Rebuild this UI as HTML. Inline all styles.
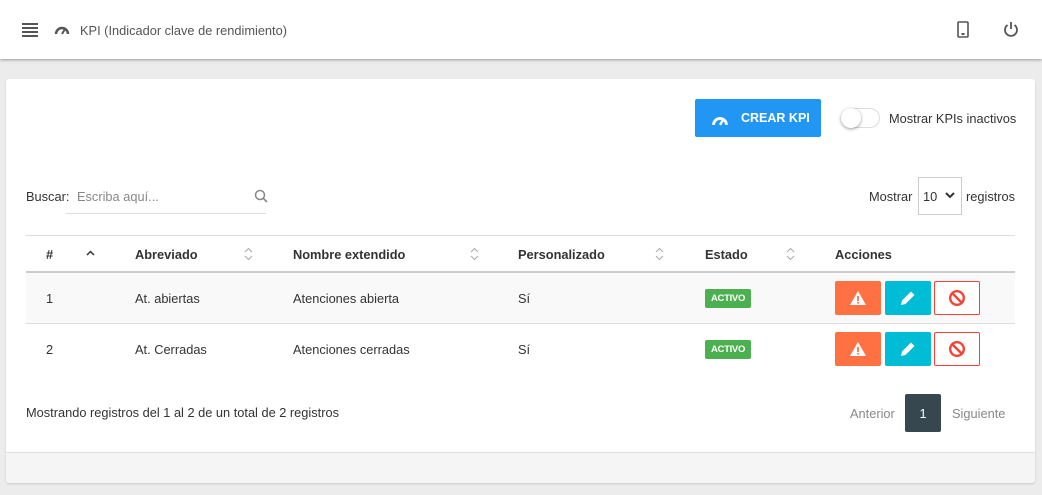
<!DOCTYPE html>
<html><head><meta charset="utf-8"><style>
*{box-sizing:border-box;margin:0;padding:0}
body{width:1042px;height:495px;background:#ececec;font-family:"Liberation Sans",sans-serif;font-size:12.8px;color:#333;position:relative;overflow:hidden}
.top{position:absolute;left:0;top:0;width:1042px;height:59px;background:#fff;box-shadow:0 1px 3px rgba(0,0,0,.35)}
.abs{position:absolute}
.card{position:absolute;left:6px;top:79px;width:1029px;height:404px;background:#fff;border-radius:3px;box-shadow:0 1px 2px rgba(0,0,0,.15)}
.foot{position:absolute;left:0;bottom:0;width:100%;height:31px;background:#f5f5f5;border-top:1px solid #e0e0e0;border-radius:0 0 3px 3px}
.th{position:absolute;top:247px;font-weight:bold;color:#333}
.td{position:absolute;color:#333}
.btn{position:absolute;width:46px;height:34px;border-radius:2px;display:flex;align-items:center;justify-content:center}
.badge{position:absolute;left:705px;width:46px;height:19px;background:#4caf50;color:#fff;font-size:9.5px;font-weight:bold;border-radius:2px;display:flex;align-items:center;justify-content:center;letter-spacing:-.3px}
</style></head><body>
<div class="top"></div>
<svg class="abs" style="left:22px;top:23px" width="16" height="14"><g fill="#555"><rect y="0" width="16" height="2"/><rect y="4" width="16" height="2"/><rect y="8" width="16" height="2"/><rect y="12" width="16" height="2"/></g></svg>
<svg class="abs" style="left:54px;top:24px" width="16" height="12" viewBox="0 0 16 12"><path d="M2 10A6 6 0 0 1 14 10" fill="none" stroke="#555" stroke-width="2.4"/><path d="M8 10L11 5" stroke="#555" stroke-width="2"/></svg>
<div class="abs" style="left:80px;top:23px;color:#555">KPI (Indicador clave de rendimiento)</div>
<svg class="abs" style="left:957px;top:21px" width="12" height="17"><rect x="1" y="1" width="10" height="15" rx="1" fill="none" stroke="#555" stroke-width="1.6"/><rect x="4.5" y="12" width="3" height="2" fill="#555"/></svg>
<svg class="abs" style="left:1003px;top:21px" width="16" height="16" viewBox="0 0 16 16"><path d="M4.5 4A6 6 0 1 0 11.5 4" fill="none" stroke="#555" stroke-width="1.8"/><path d="M8 1V8" stroke="#555" stroke-width="1.8"/></svg>
<div class="card"><div class="foot"></div></div>
<div class="abs" style="left:695px;top:99px;width:126px;height:38px;background:#2196f3;border-radius:2px"></div>
<svg class="abs" style="left:711px;top:113px" width="18" height="13" viewBox="0 0 16 12"><path d="M2 11A6 6 0 0 1 14 11" fill="none" stroke="#fff" stroke-width="2.6"/><path d="M8 11L11 6" stroke="#fff" stroke-width="2.2"/></svg>
<div class="abs" style="left:741px;top:111px;color:#fff;font-weight:bold;font-size:12.5px">CREAR KPI</div>
<div class="abs" style="left:841px;top:108px;width:39px;height:20px;border-radius:10px;border:1px solid #ddd;background:#fff"></div>
<div class="abs" style="left:841px;top:108px;width:20px;height:20px;border-radius:50%;background:#fff;box-shadow:0 1px 3px rgba(0,0,0,.4)"></div>
<div class="abs" style="left:889px;top:111px;color:#333">Mostrar KPIs inactivos</div>
<div class="abs" style="left:26px;top:189px">Buscar:</div>
<div class="abs" style="left:77px;top:189px;color:#888">Escriba aquí...</div>
<div class="abs" style="left:66px;top:213px;width:200px;height:1px;background:#ddd"></div>
<svg class="abs" style="left:254px;top:189px" width="14" height="14"><circle cx="6" cy="6" r="4.5" fill="none" stroke="#888" stroke-width="1.5"/><path d="M9.5 9.5L13 13" stroke="#888" stroke-width="1.6"/></svg>
<div class="abs" style="left:869px;top:189px">Mostrar</div>
<div class="abs" style="left:918px;top:177px;width:44px;height:38px;border:1px solid #ccc;background:#fff"></div>
<div class="abs" style="left:923px;top:189px">10</div>
<svg class="abs" style="left:945px;top:192px" width="10" height="7"><path d="M1 1L5 5L9 1" fill="none" stroke="#333" stroke-width="2"/></svg>
<div class="abs" style="left:966px;top:189px">registros</div>
<div class="abs" style="left:26px;top:235px;width:989px;height:1px;background:#ddd"></div>
<div class="abs" style="left:26px;top:271px;width:989px;height:2px;background:#ccc"></div>
<div class="abs" style="left:26px;top:273px;width:989px;height:50px;background:#f9f9f9"></div>
<div class="abs" style="left:26px;top:323px;width:989px;height:1px;background:#ddd"></div>
<div class="th" style="left:46px">#</div>
<svg class="abs" style="left:86px;top:250px" width="9" height="6"><path d="M1 5L4.5 1.5L8 5" fill="none" stroke="#333" stroke-width="1.5"/></svg>
<div class="th" style="left:135px">Abreviado</div>
<div class="th" style="left:293px">Nombre extendido</div>
<div class="th" style="left:518px">Personalizado</div>
<div class="th" style="left:705px">Estado</div>
<div class="th" style="left:835px">Acciones</div>
<svg class="abs" style="left:244px;top:247px" width="9" height="14"><path d="M1 5L4.5 1.5L8 5M1 9L4.5 12.5L8 9" fill="none" stroke="#aaa" stroke-width="1"/></svg>
<svg class="abs" style="left:470px;top:247px" width="9" height="14"><path d="M1 5L4.5 1.5L8 5M1 9L4.5 12.5L8 9" fill="none" stroke="#aaa" stroke-width="1"/></svg>
<svg class="abs" style="left:655px;top:247px" width="9" height="14"><path d="M1 5L4.5 1.5L8 5M1 9L4.5 12.5L8 9" fill="none" stroke="#aaa" stroke-width="1"/></svg>
<svg class="abs" style="left:786px;top:247px" width="9" height="14"><path d="M1 5L4.5 1.5L8 5M1 9L4.5 12.5L8 9" fill="none" stroke="#aaa" stroke-width="1"/></svg>

<div class="td" style="left:46px;top:291px">1</div>
<div class="td" style="left:135px;top:291px">At. abiertas</div>
<div class="td" style="left:293px;top:291px">Atenciones abierta</div>
<div class="td" style="left:518px;top:291px">Sí</div>
<div class="badge" style="top:289px">ACTIVO</div>
<div class="td" style="left:46px;top:342px">2</div>
<div class="td" style="left:135px;top:342px">At. Cerradas</div>
<div class="td" style="left:293px;top:342px">Atenciones cerradas</div>
<div class="td" style="left:518px;top:342px">Sí</div>
<div class="badge" style="top:340px">ACTIVO</div>

<div class="btn" style="left:835px;top:281px;background:#ff7043"><svg width="18" height="16"><path d="M9 1L17 15H1Z" fill="#fff"/><rect x="8.1" y="6" width="1.8" height="5" fill="#ff7043"/><rect x="8.1" y="12" width="1.8" height="1.6" fill="#ff7043"/></svg></div>
<div class="btn" style="left:885px;top:281px;background:#00bcd4"><svg width="18" height="18"><path d="M2 16L3 11.5L12 2.5L15.5 6L6.5 15Z" fill="#fff"/></svg></div>
<div class="btn" style="left:934px;top:281px;border:1px solid #f44336;background:#fff"><svg width="18" height="18"><circle cx="9" cy="9" r="6.8" fill="none" stroke="#f44336" stroke-width="2.4"/><path d="M4.5 4.5L13.5 13.5" stroke="#f44336" stroke-width="2.4"/></svg></div>
<div class="btn" style="left:835px;top:332px;background:#ff7043"><svg width="18" height="16"><path d="M9 1L17 15H1Z" fill="#fff"/><rect x="8.1" y="6" width="1.8" height="5" fill="#ff7043"/><rect x="8.1" y="12" width="1.8" height="1.6" fill="#ff7043"/></svg></div>
<div class="btn" style="left:885px;top:332px;background:#00bcd4"><svg width="18" height="18"><path d="M2 16L3 11.5L12 2.5L15.5 6L6.5 15Z" fill="#fff"/></svg></div>
<div class="btn" style="left:934px;top:332px;border:1px solid #f44336;background:#fff"><svg width="18" height="18"><circle cx="9" cy="9" r="6.8" fill="none" stroke="#f44336" stroke-width="2.4"/><path d="M4.5 4.5L13.5 13.5" stroke="#f44336" stroke-width="2.4"/></svg></div>

<div class="abs" style="left:26px;top:405px">Mostrando registros del 1 al 2 de un total de 2 registros</div>
<div class="abs" style="left:850px;top:406px;color:#888">Anterior</div>
<div class="abs" style="left:905px;top:394px;width:36px;height:38px;background:#37474f;border-radius:2px;color:#fff;display:flex;align-items:center;justify-content:center">1</div>
<div class="abs" style="left:952px;top:406px;color:#888">Siguiente</div>
</body></html>
